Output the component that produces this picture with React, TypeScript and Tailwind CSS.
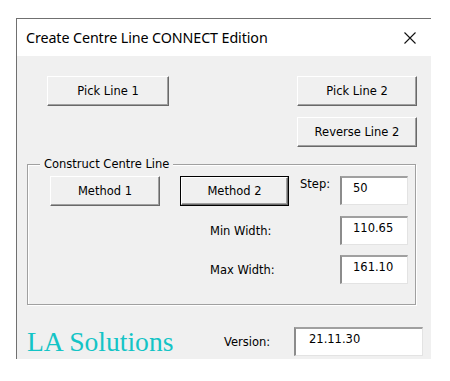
import React from "react";

const uiFont = { fontFamily: '"DejaVu Sans", Verdana, sans-serif' };

interface WinButtonProps {
    label: string;
    width: string;
    isDefault?: boolean;
}

const WinButton: React.FC<WinButtonProps> = ({ label, width, isDefault }) => {
    const face = (
        <div className="flex-1 flex items-center justify-center bg-[#f0f0f0] border-t border-l border-t-white border-l-white border-b border-r border-b-[#696969] border-r-[#696969] shadow-[inset_-1px_-1px_0_#a0a0a0] text-[11.5px] leading-[14px] text-black">
            {label}
        </div>
    );
    if (isDefault) {
        return <div className={`${width} h-[30px] flex border border-black`}>{face}</div>;
    }
    return <div className={`${width} h-[30px] flex`}>{face}</div>;
};

const TextBox: React.FC<{ value: string; width: string; pad: string }> = ({ value, width, pad }) => (
    <div className={`${width} h-[29px] bg-white border-t-2 border-l-2 border-t-[#a0a0a0] border-l-[#8c8c8c] border-b border-r border-b-[#e3e3e3] border-r-[#e3e3e3] pt-[3px] ${pad} text-[11.5px] leading-[14px] text-black`}>
        {value}
    </div>
);

export default function App() {
    return (
        <div className="w-[450px] h-[381px] bg-white overflow-hidden pt-[18px] pl-[16px]" style={uiFont}>
            <div className="w-[415px] h-[341px] flex flex-col border-l border-t border-[#707070]">
                {/* title bar */}
                <div className="h-[37px] bg-white flex items-center justify-between pl-[9px] pr-[15px]">
                    <span className="text-[14.3px] text-black tracking-[-0.1px]" style={{ fontFamily: '"Noto Sans", "Open Sans", sans-serif' }}>
                        Create Centre Line CONNECT Edition
                    </span>
                    <svg width="12" height="12" viewBox="0 0 12 12">
                        <path d="M0.5 0.5 L11.5 11.5 M11.5 0.5 L0.5 11.5" stroke="#111" strokeWidth="1.1" />
                    </svg>
                </div>

                <div className="flex-1 bg-[#f0f0f0]">
                    {/* pick buttons */}
                    <div className="flex pt-[20px] pl-[30px] pr-[14px]">
                        <WinButton label="Pick Line 1" width="w-[122px]" />
                        <div className="ml-auto flex flex-col gap-[11px]">
                            <WinButton label="Pick Line 2" width="w-[120px]" />
                            <WinButton label="Reverse Line 2" width="w-[120px]" />
                        </div>
                    </div>

                    {/* group box */}
                    <div className="relative mt-[17px] ml-[10px] w-[389px] h-[141px] border border-[#a0a0a0] shadow-[1px_1px_0_#fff,inset_1px_1px_0_#fff]">
                        <span className="absolute left-[12px] top-[-8px] px-[4px] bg-[#f0f0f0] text-[11.5px] leading-[14px] text-black">
                            Construct Centre Line
                        </span>
                        <div className="flex items-start pt-[11px] pl-[22px]">
                            <WinButton label="Method 1" width="w-[110px]" />
                            <div className="ml-[20px]">
                                <WinButton label="Method 2" width="w-[109px]" isDefault />
                            </div>
                            <span className="ml-[11px] w-[40px] mt-[1px] text-[11.5px] leading-[14px] text-black">Step:</span>
                            <TextBox value="50" width="w-[68px]" pad="pl-[11px]" />
                        </div>
                        <div className="flex items-center mt-[10px] pl-[182px]">
                            <span className="w-[130px] text-[11.5px] leading-[14px] text-black">Min Width:</span>
                            <TextBox value="110.65" width="w-[68px]" pad="pl-[11px]" />
                        </div>
                        <div className="flex items-center mt-[10px] pl-[182px]">
                            <span className="w-[130px] text-[11.5px] leading-[14px] text-black">Max Width:</span>
                            <TextBox value="161.10" width="w-[68px]" pad="pl-[11px]" />
                        </div>
                    </div>

                    {/* footer */}
                    <div className="flex items-center mt-[22px] ml-[10px]">
                        <span className="w-[197px] text-[27.6px] leading-[29px] text-[#14c4c6]" style={{ fontFamily: '"Liberation Serif", "Times New Roman", serif' }}>
                            LA Solutions
                        </span>
                        <span className="w-[70px] text-[11.5px] leading-[14px] text-black">Version:</span>
                        <TextBox value="21.11.30" width="w-[129px]" pad="pl-[13px]" />
                    </div>
                </div>
            </div>
        </div>
    );
}
